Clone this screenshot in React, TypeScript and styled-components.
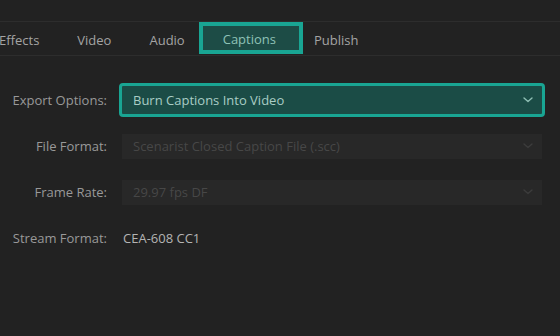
import React from "react";
import styled, { createGlobalStyle, css } from "styled-components";

const Global = createGlobalStyle`
  html, body { margin: 0; padding: 0; background: #222222; }
  body { width: 560px; height: 336px; overflow: hidden; font-family: "Open Sans", "Liberation Sans", sans-serif; font-size: 13px; }
`;

const Page = styled.div`
  width: 560px;
  height: 336px;
  background: #222222;
  overflow: hidden;
  padding-top: 21px;
  box-sizing: border-box;
`;

const TabBar = styled.div`
  display: flex;
  align-items: stretch;
  height: 33px;
  border-top: 1px solid #2d2d2d;
  border-bottom: 1px solid #2d2d2d;
  margin-left: -20px;
`;

const Tab = styled.div<{ $active?: boolean }>`
  display: flex;
  align-items: center;
  padding: 2px 19px 0;
  color: #a4a4a4;
  white-space: nowrap;
  ${(p) =>
    p.$active &&
    css`
      margin: 0 -8px 1px -5px;
      padding: 1px 23px 0 20px;
      border: 4px solid #19a593;
      background: #1d4c46;
      color: #8fc2b7;
    `}
`;

const Form = styled.div`
  display: grid;
  grid-template-columns: 107px 420px;
  grid-auto-rows: 46px;
  column-gap: 15px;
  padding-top: 21px;
  align-items: center;
`;

const Label = styled.div`
  text-align: right;
  color: #999999;
  white-space: nowrap;
`;

const Field = styled.div<{ $active?: boolean }>`
  display: flex;
  align-items: center;
  justify-content: space-between;
  height: 25px;
  padding: 0 9px 0 11px;
  box-sizing: border-box;
  background: #282828;
  color: #474747;
  white-space: nowrap;
  ${(p) =>
    p.$active &&
    css`
      margin: 0 -3px;
      width: calc(100% + 6px);
      padding: 0 9px 0 11px;
      height: 34px;
      border: 3px solid #19a593;
      border-radius: 4px;
      background: #1b4c46;
      color: #a9cdc5;
    `}
`;

const Value = styled.div`
  color: #b4b4b4;
  padding-left: 1px;
`;

const Chevron = ({ color }: { color: string }) => (
  <svg width="10" height="6" viewBox="0 0 10 6">
    <path d="M1 1 L5 4.5 L9 1" fill="none" stroke={color} strokeWidth="1.4" strokeLinecap="round" strokeLinejoin="round" />
  </svg>
);

export default function App() {
  return (
    <Page>
      <Global />
      <TabBar>
        <Tab>Effects</Tab>
        <Tab>Video</Tab>
        <Tab>Audio</Tab>
        <Tab $active>Captions</Tab>
        <Tab>Publish</Tab>
      </TabBar>
      <Form>
        <Label>Export Options:</Label>
        <Field $active>
          <span>Burn Captions Into Video</span>
          <Chevron color="#8fbfb4" />
        </Field>
        <Label>File Format:</Label>
        <Field>
          <span>Scenarist Closed Caption File (.scc)</span>
          <Chevron color="#3c3c3c" />
        </Field>
        <Label>Frame Rate:</Label>
        <Field>
          <span>29.97 fps DF</span>
          <Chevron color="#3c3c3c" />
        </Field>
        <Label>Stream Format:</Label>
        <Value>CEA-608 CC1</Value>
      </Form>
    </Page>
  );
}
